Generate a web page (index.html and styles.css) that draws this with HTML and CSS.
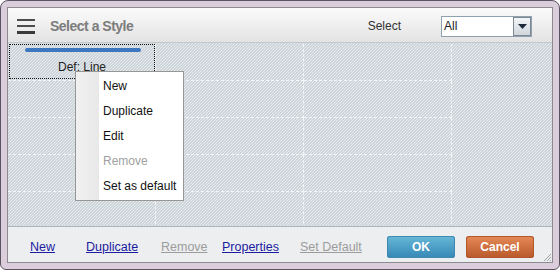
FILE: index.html
```html
<!DOCTYPE html>
<html lang="en">
<head>
    <meta charset="UTF-8">
    <title>Select a Style</title>
    <link rel="stylesheet" href="styles.css">
</head>
<body>
    <div class="window">
        <div class="inner">
            <div class="header">
                <div class="menu-icon"><span></span><span></span><span></span></div>
                <div class="title">Select a Style</div>
                <div class="select-label">Select</div>
                <div class="select-box">
                    <span class="select-value">All</span>
                    <span class="select-btn"><svg width="9" height="5" viewBox="0 0 9 5"><path d="M0 0 H9 L4.5 5 Z" fill="#1c2a3a"/></svg></span>
                </div>
            </div>

            <div class="canvas">
                <div class="cell">
                    <div class="style-item">
                        <div class="line-sample"></div>
                        <div class="item-label">Def: Line</div>
                    </div>
                </div>
                <div class="cell"></div><div class="cell"></div>
                <div class="cell"></div><div class="cell"></div><div class="cell"></div>
                <div class="cell"></div><div class="cell"></div><div class="cell"></div>
                <div class="cell"></div><div class="cell"></div><div class="cell"></div>
                <div class="cell"></div><div class="cell"></div><div class="cell"></div>

                <ul class="context-menu">
                    <li>New</li>
                    <li>Duplicate</li>
                    <li>Edit</li>
                    <li class="disabled">Remove</li>
                    <li>Set as default</li>
                </ul>
            </div>

            <div class="footer">
                <div class="links">
                    <a href="#">New</a>
                    <a href="#">Duplicate</a>
                    <a href="#" class="disabled">Remove</a>
                    <a href="#">Properties</a>
                    <a href="#" class="disabled">Set Default</a>
                </div>
                <div class="buttons">
                    <button class="ok-btn">OK</button>
                    <button class="cancel-btn">Cancel</button>
                </div>
                <svg class="grip" width="9" height="9" viewBox="0 0 9 9">
                    <path d="M8 1 L1 8 M8 4 L4 8 M8 7 L7 8" stroke="#a0a4a8" stroke-width="1"/>
                </svg>
            </div>
        </div>
    </div>
</body>
</html>
```

FILE: styles.css
```css
body {
    margin: 0;
    font-family: "Liberation Sans", Arial, sans-serif;
    font-size: 12px;
    color: #222;
    background: #fff;
}
.window {
    width: 560px;
    height: 270px;
    box-sizing: border-box;
    border: 1px solid #5a5360;
    border-radius: 8px 8px 6px 6px;
    background: #dccddc;
    padding: 6px;
}
.inner {
    height: 100%;
    box-sizing: border-box;
    border: 1px solid #8c8c90;
    display: flex;
    flex-direction: column;
    background: #eceef0;
}
.header {
    height: 35px;
    box-sizing: border-box;
    flex-shrink: 0;
    display: flex;
    align-items: center;
    background: linear-gradient(#fbfbfb, #e3e3e3);
    border-bottom: 1px solid #c4c8cc;
    padding: 2px 20px 0 9px;
}
.menu-icon {
    width: 18px;
    display: flex;
    flex-direction: column;
    gap: 4px;
    margin-right: 15px;
}
.menu-icon span {
    height: 2px;
    background: #4c4c4c;
}
.menu-icon span:last-child {
    height: 3px;
    background: #3a3a3a;
}
.title {
    font-weight: bold;
    font-size: 14px;
    letter-spacing: -0.5px;
    color: #7c7c7c;
    flex: 1;
}
.select-label {
    color: #333;
    margin-right: 40px;
}
.select-box {
    width: 89px;
    height: 19px;
    border: 1px solid #8fa1b1;
    background: #fff;
    display: flex;
    align-items: stretch;
}
.select-value {
    flex: 1;
    padding-left: 2px;
    line-height: 19px;
    color: #222;
}
.select-btn {
    width: 16px;
    border: 1px solid #7d8893;
    background: linear-gradient(#f3f5f7, #d0d6dc);
    display: flex;
    align-items: center;
    justify-content: center;
}
.canvas {
    height: 182px;
    flex-shrink: 0;
    position: relative;
    overflow: hidden;
    display: grid;
    grid-template-columns: repeat(3, 148px);
    grid-auto-rows: 37px;
    padding-top: 1px;
    background: repeating-linear-gradient(-45deg, #cdd5da 0 1.2px, #e6ebee 1.2px 2.12px);
}
.cell {
    border-right: 1px dashed rgba(255, 255, 255, 0.75);
    border-bottom: 1px dashed rgba(255, 255, 255, 0.75);
}
.style-item {
    height: 35px;
    margin: 0 0 0 1px;
    border: 1px dotted #111;
    box-sizing: border-box;
    text-align: center;
    padding-top: 3px;
}
.line-sample {
    width: 116px;
    height: 4px;
    border-radius: 2px;
    background: #3d77c0;
    margin: 0 auto 8px 15px;
}
.item-label {
    font-size: 12px;
    color: #222;
}
.context-menu {
    position: absolute;
    left: 67px;
    top: 28px;
    width: 109px;
    box-sizing: border-box;
    margin: 0;
    padding: 2px 0 1px;
    list-style: none;
    border: 1px solid #979797;
    background: linear-gradient(90deg, #f1f1f1 0, #e8e8e8 23px, #fff 23px);
}
.context-menu li {
    height: 25px;
    line-height: 25px;
    padding-left: 27px;
    font-size: 12px;
    color: #111;
}
.context-menu li.disabled {
    color: #a0a0a0;
}
.footer {
    flex: 1;
    position: relative;
    border-top: 1px solid #aab5bd;
    display: flex;
    align-items: center;
    padding: 4px 18px 0 22px;
}
.links {
    flex: 1;
    display: grid;
    grid-template-columns: 56px 75px 61px 78px auto;
}
.links a {
    color: #1c1ca0;
    font-size: 12.5px;
    justify-self: start;
}
.links a.disabled {
    color: #9c9c9c;
}
.buttons {
    display: flex;
    gap: 11px;
}
button {
    width: 68px;
    height: 22px;
    border: none;
    border-radius: 3px;
    color: #fff;
    font-family: "Liberation Sans", Arial, sans-serif;
    font-size: 12px;
    font-weight: bold;
    padding: 0;
}
.ok-btn {
    background: linear-gradient(#68b8d8, #3587b6);
    box-shadow: inset 0 0 0 1px #3f88b0;
}
.cancel-btn {
    background: linear-gradient(#e68a58, #b8582a);
    box-shadow: inset 0 0 0 1px #b0582c;
}
.grip {
    position: absolute;
    right: 0;
    bottom: 0;
}
```
